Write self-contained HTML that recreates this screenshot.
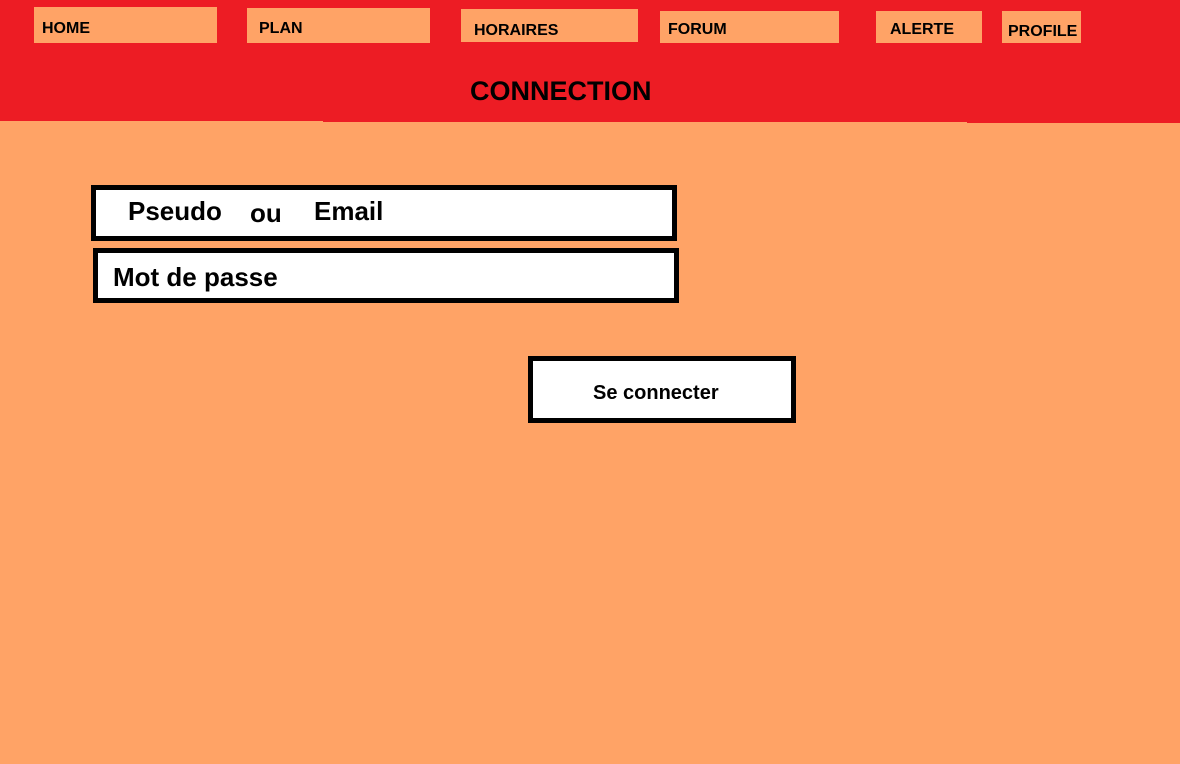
<!DOCTYPE html>
<html><head><meta charset="utf-8"><style>
*{margin:0;padding:0;box-sizing:border-box}
body{width:1180px;height:764px;background:#FFA366;position:relative;overflow:hidden;font-family:"Liberation Sans",sans-serif;font-weight:bold;color:#000}
.a{position:absolute}
.t{position:absolute;line-height:1;white-space:nowrap}
.r{background:#ED1C24}
.o{background:#FFA366}
.box{position:absolute;background:#fff;border:5px solid #000}
</style></head><body>
<div class="a r" style="left:0;top:0;width:323px;height:121px"></div>
<div class="a r" style="left:323px;top:0;width:644px;height:122px"></div>
<div class="a r" style="left:967px;top:0;width:213px;height:123px"></div>
<div class="a o" style="left:34px;top:7px;width:183px;height:36px"></div>
<div class="a o" style="left:247px;top:8px;width:183px;height:35px"></div>
<div class="a o" style="left:461px;top:9px;width:177px;height:33px"></div>
<div class="a o" style="left:660px;top:11px;width:179px;height:32px"></div>
<div class="a o" style="left:876px;top:11px;width:106px;height:32px"></div>
<div class="a o" style="left:1002px;top:11px;width:79px;height:32px"></div>
<div class="t" style="left:42px;top:21px;font-size:16px">HOME</div>
<div class="t" style="left:259px;top:21px;font-size:16px">PLAN</div>
<div class="t" style="left:474px;top:23px;font-size:16px">HORAIRES</div>
<div class="t" style="left:668px;top:22px;font-size:16px">FORUM</div>
<div class="t" style="left:890px;top:22px;font-size:16px">ALERTE</div>
<div class="t" style="left:1008px;top:24px;font-size:16px">PROFILE</div>
<div class="t" style="left:470px;top:78px;font-size:27px">CONNECTION</div>
<div class="box" style="left:91px;top:185px;width:586px;height:56px"></div>
<div class="box" style="left:93px;top:248px;width:586px;height:55px"></div>
<div class="box" style="left:528px;top:356px;width:268px;height:67px"></div>
<div class="t" style="left:128px;top:198px;font-size:26px">Pseudo</div>
<div class="t" style="left:250px;top:200px;font-size:26px">ou</div>
<div class="t" style="left:314px;top:198px;font-size:26px">Email</div>
<div class="t" style="left:113px;top:264px;font-size:26px">Mot de passe</div>
<div class="t" style="left:593px;top:383px;font-size:20px">Se connecter</div>
</body></html>
